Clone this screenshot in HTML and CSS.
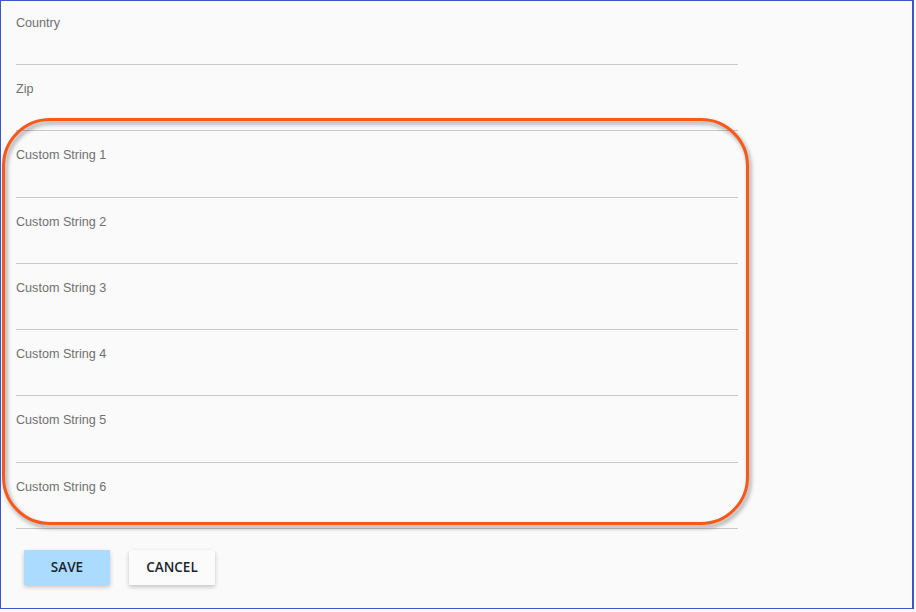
FILE: index.html
```html
<!DOCTYPE html>
<html lang="en">

<head>
    <meta charset="UTF-8">
    <meta name="viewport" content="width=device-width, initial-scale=1.0">
    <title>Edit Contact</title>
    <link rel="stylesheet" href="styles.css">
</head>

<body>
    <div class="frame">
        <form class="form">
            <div class="fields">
                <div class="field"><label>Country</label></div>
                <div class="field"><label>Zip</label></div>
                <div class="field"><label>Custom String 1</label></div>
                <div class="field"><label>Custom String 2</label></div>
                <div class="field"><label>Custom String 3</label></div>
                <div class="field"><label>Custom String 4</label></div>
                <div class="field"><label>Custom String 5</label></div>
                <div class="field"><label>Custom String 6</label></div>
            </div>
            <div class="actions">
                <button type="button" class="btn btn-save">SAVE</button>
                <button type="button" class="btn btn-cancel">CANCEL</button>
            </div>
        </form>
        <div class="highlight"></div>
    </div>
</body>

</html>
```

FILE: styles.css
```css
* {
    margin: 0;
    padding: 0;
    box-sizing: border-box;
}

body {
    background: #fbfbfb;
    font-family: "Liberation Sans", Arial, sans-serif;
}

.frame {
    position: relative;
    width: 914px;
    height: 609px;
    border: 1px solid #3b56c6;
    border-right-width: 2px;
    background: #fafafa;
    overflow: hidden;
}

.form {
    padding-left: 15px;
}

.fields {
    width: 722px;
    margin-top: -2.3px;
}

.field {
    height: 66.29px;
    padding-top: 16px;
    border-bottom: 1px solid #c9c9c9;
}

.field label {
    display: block;
    font-size: 12.6px;
    line-height: 16px;
    color: #707070;
}

.actions {
    display: flex;
    gap: 19px;
    padding: 21px 0 0 8px;
}

.btn {
    width: 86px;
    height: 35px;
    border: none;
    border-radius: 1px;
    font-family: "Open Sans", sans-serif;
    font-weight: 600;
    font-size: 13.5px;
    color: #1c1f30;
    box-shadow: 0 2px 4px rgba(0, 0, 0, .22);
    cursor: pointer;
}

.btn-save {
    background: #abdbff;
}

.btn-cancel {
    background: #fbfbfb;
}

/* annotation drawn over the custom fields */
.highlight {
    position: absolute;
    left: 1px;
    top: 117px;
    width: 747px;
    height: 407px;
    border: 3px solid #f8581a;
    border-radius: 48px;
    filter: drop-shadow(2px 3px 2px rgba(0, 0, 0, .4));
    pointer-events: none;
}
```
